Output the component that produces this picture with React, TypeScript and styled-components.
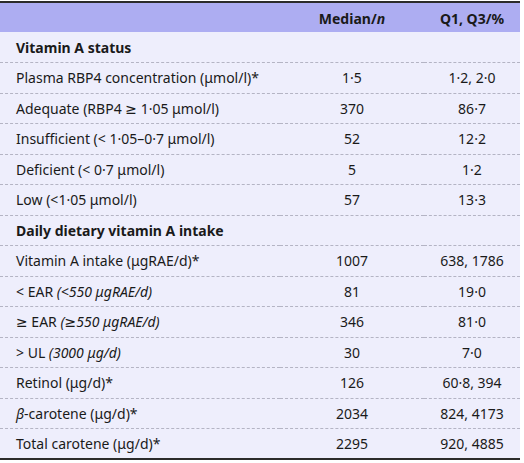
import styled, { createGlobalStyle } from 'styled-components';

const GlobalStyle = createGlobalStyle`
  html, body {
    margin: 0;
    padding: 0;
    background: #ffffff;
  }
  body {
    font-family: "Noto Sans", "DejaVu Sans", sans-serif;
    color: #1a1a1a;
  }
`;

type Row =
  | { kind: 'section'; label: string }
  | { kind: 'data'; label: React.ReactNode; median: string; quart: string };

const rows: Row[] = [
  { kind: 'section', label: 'Vitamin A status' },
  { kind: 'data', label: 'Plasma RBP4 concentration (μmol/l)*', median: '1·5', quart: '1·2, 2·0' },
  { kind: 'data', label: 'Adequate (RBP4 ≥ 1·05 μmol/l)', median: '370', quart: '86·7' },
  { kind: 'data', label: 'Insufficient (< 1·05–0·7 μmol/l)', median: '52', quart: '12·2' },
  { kind: 'data', label: 'Deficient (< 0·7 μmol/l)', median: '5', quart: '1·2' },
  { kind: 'data', label: 'Low (<1·05 μmol/l)', median: '57', quart: '13·3' },
  { kind: 'section', label: 'Daily dietary vitamin A intake' },
  { kind: 'data', label: 'Vitamin A intake (μgRAE/d)*', median: '1007', quart: '638, 1786' },
  { kind: 'data', label: <>&lt; EAR <em>(&lt;550 μgRAE/d)</em></>, median: '81', quart: '19·0' },
  { kind: 'data', label: <>≥ EAR <em>(≥550 μgRAE/d)</em></>, median: '346', quart: '81·0' },
  { kind: 'data', label: <>&gt; UL <em>(3000 μg/d)</em></>, median: '30', quart: '7·0' },
  { kind: 'data', label: 'Retinol (μg/d)*', median: '126', quart: '60·8, 394' },
  { kind: 'data', label: <><em>β</em>-carotene (μg/d)*</>, median: '2034', quart: '824, 4173' },
  { kind: 'data', label: 'Total carotene (μg/d)*', median: '2295', quart: '920, 4885' },
];

const Table = styled.table`
  width: 520px;
  border-collapse: collapse;
  border-top: 2px solid #2b2b2b;
  border-bottom: 2px solid #2b2b2b;
  margin-top: 1px;
  font-size: 14px;
  background: #eeeefc;

  em {
    font-style: italic;
  }
`;

const HeadRow = styled.tr`
  background: #adadf2;
  height: 30px;
`;

const HeadCell = styled.th<{ $first?: boolean }>`
  font-weight: 700;
  text-align: ${p => (p.$first ? 'left' : 'center')};
  padding: 2px 0 0;
  width: ${p => (p.$first ? '280px' : 'auto')};
`;

const BodyRow = styled.tr<{ $last?: boolean }>`
  height: 30.5px;
  border-bottom: ${p => (p.$last ? 'none' : '1px dashed #b4b4c4')};
`;

const LabelCell = styled.td<{ $section?: boolean }>`
  padding: 0 0 0 16px;
  font-weight: ${p => (p.$section ? 700 : 400)};
  white-space: nowrap;
`;

const ValueCell = styled.td`
  text-align: center;
  padding: 0;
  white-space: nowrap;
`;

export default function App() {
  return (
    <>
      <GlobalStyle />
      <Table>
        <colgroup>
          <col style={{ width: 280 }} />
          <col style={{ width: 144 }} />
          <col style={{ width: 96 }} />
        </colgroup>
        <thead>
          <HeadRow>
            <HeadCell $first />
            <HeadCell>
              Median/<em>n</em>
            </HeadCell>
            <HeadCell>Q1, Q3/%</HeadCell>
          </HeadRow>
        </thead>
        <tbody>
          {rows.map((r, i) => {
            const last = i === rows.length - 1;
            if (r.kind === 'section') {
              return (
                <BodyRow key={i} $last={last}>
                  <LabelCell $section colSpan={3}>
                    {r.label}
                  </LabelCell>
                </BodyRow>
              );
            }
            return (
              <BodyRow key={i} $last={last}>
                <LabelCell>{r.label}</LabelCell>
                <ValueCell>{r.median}</ValueCell>
                <ValueCell>{r.quart}</ValueCell>
              </BodyRow>
            );
          })}
        </tbody>
      </Table>
    </>
  );
}
